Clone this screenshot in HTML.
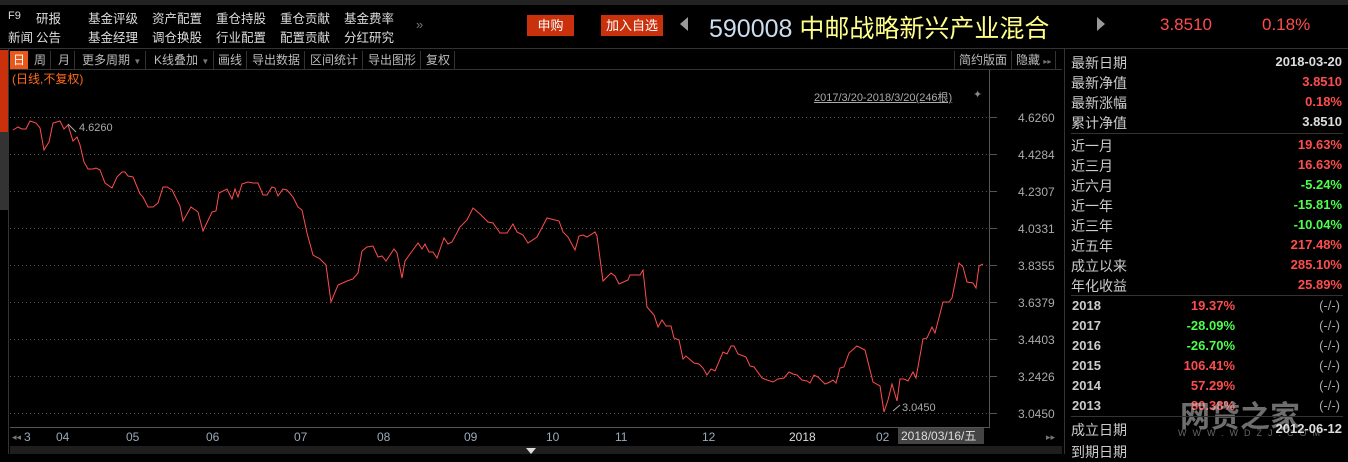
<!DOCTYPE html>
<html><head><meta charset="utf-8"><style>
*{margin:0;padding:0;box-sizing:border-box}
body{width:1348px;height:454px;background:#000;overflow:hidden;position:relative;font-family:"Liberation Sans","Noto Sans CJK SC",sans-serif;color:#ccc}
.a{position:absolute;white-space:nowrap}
.nav{font-size:12.5px;color:#ddd}
.btn{background:#c8310b;color:#fff;font-size:13px;text-align:center;line-height:21px;height:21px}
.tb{top:51px;height:18px;font-size:12px;color:#bbb;line-height:18px;border-right:1px solid #333;padding:0 4px}
.rp{font-size:14px;color:#ccc;left:1071px}
.rv{font-size:13px;font-weight:bold;right:6px}
.r{color:#ff4d4d}.g{color:#4dff4d}.w{color:#ddd}
.ax{font-size:12px;color:#9ab;top:430px}
.pl{font-size:12px;color:#aaa;left:1018px}
</style></head><body>
<div class="a" style="left:0;top:0;width:1348px;height:5px;background:#222"></div>
<div class="a nav" style="left:8px;top:10px;font-size:11px">F9</div>
<div class="a nav" style="left:8px;top:27px">新闻</div>
<div class="a nav" style="left:36px;top:8px">研报</div><div class="a nav" style="left:36px;top:27px">公告</div>
<div class="a nav" style="left:88px;top:8px">基金评级</div><div class="a nav" style="left:88px;top:27px">基金经理</div>
<div class="a nav" style="left:152px;top:8px">资产配置</div><div class="a nav" style="left:152px;top:27px">调仓换股</div>
<div class="a nav" style="left:216px;top:8px">重仓持股</div><div class="a nav" style="left:216px;top:27px">行业配置</div>
<div class="a nav" style="left:280px;top:8px">重仓贡献</div><div class="a nav" style="left:280px;top:27px">配置贡献</div>
<div class="a nav" style="left:344px;top:8px">基金费率</div><div class="a nav" style="left:344px;top:27px">分红研究</div>
<div class="a" style="left:416px;top:17px;color:#777;font-size:13px">»</div>
<div class="a btn" style="left:527px;top:15px;width:47px">申购</div>
<div class="a btn" style="left:601px;top:15px;width:62px">加入自选</div>
<div class="a" style="left:680px;top:17px;width:0;height:0;border-top:7px solid transparent;border-bottom:7px solid transparent;border-right:8px solid #999"></div>
<div class="a" style="left:709px;top:9px;font-size:25px;color:#cde"><span>590008</span> <span style="color:#ffff88">中邮战略新兴产业混合</span></div>
<div class="a" style="left:1097px;top:17px;width:0;height:0;border-top:7px solid transparent;border-bottom:7px solid transparent;border-left:8px solid #999"></div>
<div class="a" style="left:1160px;top:15px;font-size:17px;color:#ff4d4d">3.8510</div>
<div class="a" style="left:1262px;top:15px;font-size:17px;color:#ff4d4d">0.18%</div>
<div class="a" style="left:0;top:48px;width:1348px;height:1px;background:#333"></div>
<!-- left strip -->
<div class="a" style="left:0;top:50px;width:8px;height:82px;background:#c8310b"></div>
<div class="a" style="left:0;top:132px;width:8px;height:78px;background:#333"></div>
<div class="a" style="left:8px;top:49px;width:1px;height:405px;background:#333"></div>
<!-- toolbar -->
<div class="a" style="left:10px;top:51px;height:18px;width:18px;background:#e8581b;color:#fff;font-size:12px;line-height:18px;text-align:center">日</div>
<div class="a tb" style="left:30px">周</div>
<div class="a tb" style="left:54px">月</div>
<div class="a tb" style="left:78px">更多周期 <span style="font-size:8px;color:#777">▼</span></div>
<div class="a tb" style="left:150px">K线叠加 <span style="font-size:8px;color:#777">▼</span></div>
<div class="a tb" style="left:214px">画线</div>
<div class="a tb" style="left:248px">导出数据</div>
<div class="a tb" style="left:306px">区间统计</div>
<div class="a tb" style="left:364px">导出图形</div>
<div class="a tb" style="left:422px">复权</div>
<div class="a tb" style="left:954px;border-left:1px solid #333">简约版面</div>
<div class="a tb" style="left:1012px">隐藏 <span style="font-size:8px;color:#777">▸▸</span></div>
<div class="a" style="left:10px;top:69px;width:1052px;height:1px;background:#333"></div>
<div class="a" style="left:12px;top:70px;font-size:12px;color:#ff6a1a">(日线,不复权)</div>
<div class="a" style="left:814px;top:89px;font-size:11px;color:#aaa;text-decoration:underline">2017/3/20-2018/3/20(246根)</div>
<div class="a" style="left:973px;top:88px;font-size:11px;color:#888">✦</div>
<!-- chart -->
<svg class="a" style="left:0;top:0" width="1064" height="454">
<g stroke="#555" stroke-dasharray="1,3" stroke-width="1">
<line x1="10" x2="992" y1="117.5" y2="117.5"/><line x1="10" x2="992" y1="154.5" y2="154.5"/><line x1="10" x2="992" y1="191.5" y2="191.5"/><line x1="10" x2="992" y1="228.5" y2="228.5"/><line x1="10" x2="992" y1="265.5" y2="265.5"/><line x1="10" x2="992" y1="302.5" y2="302.5"/><line x1="10" x2="992" y1="339.5" y2="339.5"/><line x1="10" x2="992" y1="376.5" y2="376.5"/><line x1="10" x2="992" y1="413.5" y2="413.5"/>
</g>
<line x1="989.5" x2="989.5" y1="70" y2="428" stroke="#555"/>
<g stroke="#555"><line x1="989" x2="997" y1="117.5" y2="117.5"/><line x1="989" x2="997" y1="154.5" y2="154.5"/><line x1="989" x2="997" y1="191.5" y2="191.5"/><line x1="989" x2="997" y1="228.5" y2="228.5"/><line x1="989" x2="997" y1="265.5" y2="265.5"/><line x1="989" x2="997" y1="302.5" y2="302.5"/><line x1="989" x2="997" y1="339.5" y2="339.5"/><line x1="989" x2="997" y1="376.5" y2="376.5"/><line x1="989" x2="997" y1="413.5" y2="413.5"/></g>
<line x1="10" x2="990" y1="427.5" y2="427.5" stroke="#555"/>
<polyline fill="none" stroke="#ff4d4d" stroke-width="1" points="13,130 18,127 22,129 26,129 30,121 36,123 40,128 44,150 49,142 53,123 60,121 64,129 68,125 73,141 77,137 80,145 84,162 88,169 93,169 96,168 100,170 105,183 112,188 117,177 122,172 125,172 128,176 133,177 140,194 143,197 148,207 153,207 158,203 163,187 167,187 172,190 180,206 183,221 191,207 198,212 203,231 212,212 216,211 219,193 227,189 232,199 235,189 238,197 242,184 248,182 253,183 258,183 263,195 267,195 272,187 275,188 278,196 283,189 287,190 293,197 298,207 302,210 307,233 313,255 320,259 326,265 331,302 338,285 347,281 353,279 358,273 362,251 367,247 373,246 378,257 382,256 386,261 394,249 397,253 402,278 405,261 410,254 418,243 422,249 425,244 429,252 433,252 437,258 444,238 448,244 452,242 460,227 467,220 473,208 480,214 488,222 493,223 500,233 507,233 513,224 517,232 523,235 528,243 537,237 547,218 559,221 563,232 568,237 575,250 579,236 583,235 587,237 595,232 597,236 603,281 611,273 615,276 619,284 628,280 630,275 640,275 643,270 647,307 654,315 658,327 662,320 666,326 671,326 674,338 679,340 683,359 686,356 694,363 699,364 703,368 707,375 711,369 715,371 723,352 727,354 731,346 734,346 738,354 746,357 750,366 754,367 762,378 767,380 773,382 778,379 784,378 789,372 793,374 797,375 802,380 807,381 810,383 814,375 818,377 825,384 830,382 833,380 836,383 840,368 844,367 849,353 857,346 865,350 873,382 880,386 884,412 888,400 892,384 897,401 900,379 904,379 908,381 913,372 916,378 923,339 927,338 932,327 935,333 943,302 949,302 952,298 959,263 963,267 967,282 973,283 976,288 979,266 983,264"/>
<line x1="68" y1="124" x2="76" y2="132" stroke="#aaa"/>
<line x1="893" y1="411" x2="900" y2="405" stroke="#aaa"/>
<rect x="10" y="446" width="1052" height="8" fill="#1e1e1e"/>
<polygon points="526,448 536,448 531,454" fill="#ddd"/>
</svg>
<div class="a" style="left:79px;top:122px;font-size:11px;color:#aaa">4.6260</div>
<div class="a" style="left:902px;top:402px;font-size:11px;color:#aaa">3.0450</div>
<div class="a pl" style="top:111px">4.6260</div>
<div class="a pl" style="top:148px">4.4284</div>
<div class="a pl" style="top:185px">4.2307</div>
<div class="a pl" style="top:222px">4.0331</div>
<div class="a pl" style="top:259px">3.8355</div>
<div class="a pl" style="top:296px">3.6379</div>
<div class="a pl" style="top:333px">3.4403</div>
<div class="a pl" style="top:370px">3.2426</div>
<div class="a pl" style="top:407px">3.0450</div>
<!-- x axis -->
<div class="a ax" style="left:12px;color:#777;font-size:9px;top:432px">◂◂</div>
<div class="a ax" style="left:24px">3</div>
<div class="a ax" style="left:56px">04</div><div class="a ax" style="left:126px">05</div><div class="a ax" style="left:206px">06</div><div class="a ax" style="left:294px">07</div><div class="a ax" style="left:377px">08</div><div class="a ax" style="left:464px">09</div><div class="a ax" style="left:546px">10</div><div class="a ax" style="left:615px">11</div><div class="a ax" style="left:702px">12</div><div class="a ax" style="left:789px;color:#ddd">2018</div><div class="a ax" style="left:876px">02</div>
<div class="a" style="left:898px;top:428px;height:16px;width:86px;background:#444;color:#ddd;font-size:12px;line-height:16px;padding-left:3px">2018/03/16/五</div>
<div class="a" style="left:1046px;top:432px;color:#777;font-size:9px">▸▸</div>
<!-- right panel -->
<div class="a" style="left:1064px;top:49px;width:1px;height:405px;background:#333"></div>
<div class="a rp" style="top:53px">最新日期</div><div class="a rv w" style="top:54px">2018-03-20</div>
<div class="a rp" style="top:73px">最新净值</div><div class="a rv r" style="top:74px">3.8510</div>
<div class="a rp" style="top:93px">最新涨幅</div><div class="a rv r" style="top:94px">0.18%</div>
<div class="a rp" style="top:113px">累计净值</div><div class="a rv w" style="top:114px">3.8510</div>
<div class="a" style="left:1071px;top:133px;width:272px;height:1px;background:#333"></div>
<div class="a rp" style="top:136px">近一月</div><div class="a rv r" style="top:137px">19.63%</div>
<div class="a rp" style="top:156px">近三月</div><div class="a rv r" style="top:157px">16.63%</div>
<div class="a rp" style="top:176px">近六月</div><div class="a rv g" style="top:177px">-5.24%</div>
<div class="a rp" style="top:196px">近一年</div><div class="a rv g" style="top:197px">-15.81%</div>
<div class="a rp" style="top:216px">近三年</div><div class="a rv g" style="top:217px">-10.04%</div>
<div class="a rp" style="top:236px">近五年</div><div class="a rv r" style="top:237px">217.48%</div>
<div class="a rp" style="top:256px">成立以来</div><div class="a rv r" style="top:257px">285.10%</div>
<div class="a rp" style="top:276px">年化收益</div><div class="a rv r" style="top:277px">25.89%</div>
<div class="a" style="left:1071px;top:295px;width:272px;height:1px;background:#333"></div>
<div class="a rv w" style="left:1072px;top:298px;right:auto;color:#ccc">2018</div><div class="a rv r" style="right:113px;top:298px">19.37%</div><div class="a" style="right:8px;top:298px;font-size:13px;color:#aaa">(-/-)</div>
<div class="a rv w" style="left:1072px;top:318px;right:auto;color:#ccc">2017</div><div class="a rv g" style="right:113px;top:318px">-28.09%</div><div class="a" style="right:8px;top:318px;font-size:13px;color:#aaa">(-/-)</div>
<div class="a rv w" style="left:1072px;top:338px;right:auto;color:#ccc">2016</div><div class="a rv g" style="right:113px;top:338px">-26.70%</div><div class="a" style="right:8px;top:338px;font-size:13px;color:#aaa">(-/-)</div>
<div class="a rv w" style="left:1072px;top:358px;right:auto;color:#ccc">2015</div><div class="a rv r" style="right:113px;top:358px">106.41%</div><div class="a" style="right:8px;top:358px;font-size:13px;color:#aaa">(-/-)</div>
<div class="a rv w" style="left:1072px;top:378px;right:auto;color:#ccc">2014</div><div class="a rv r" style="right:113px;top:378px">57.29%</div><div class="a" style="right:8px;top:378px;font-size:13px;color:#aaa">(-/-)</div>
<div class="a rv w" style="left:1072px;top:398px;right:auto;color:#ccc">2013</div><div class="a rv r" style="right:113px;top:398px">80.38%</div><div class="a" style="right:8px;top:398px;font-size:13px;color:#aaa">(-/-)</div>
<div class="a" style="left:1180px;top:392px;font-size:30px;font-weight:bold;color:rgba(200,200,200,0.55)">网贷之家</div>
<div class="a" style="left:1178px;top:428px;font-size:9px;letter-spacing:6px;color:rgba(200,200,200,0.5)">WWW.WDZJ.COM</div>
<div class="a" style="left:1071px;top:416px;width:272px;height:1px;background:#333"></div>
<div class="a rp" style="top:420px">成立日期</div><div class="a rv w" style="top:421px">2012-06-12</div>
<div class="a rp" style="top:442px">到期日期</div>
</body></html>
